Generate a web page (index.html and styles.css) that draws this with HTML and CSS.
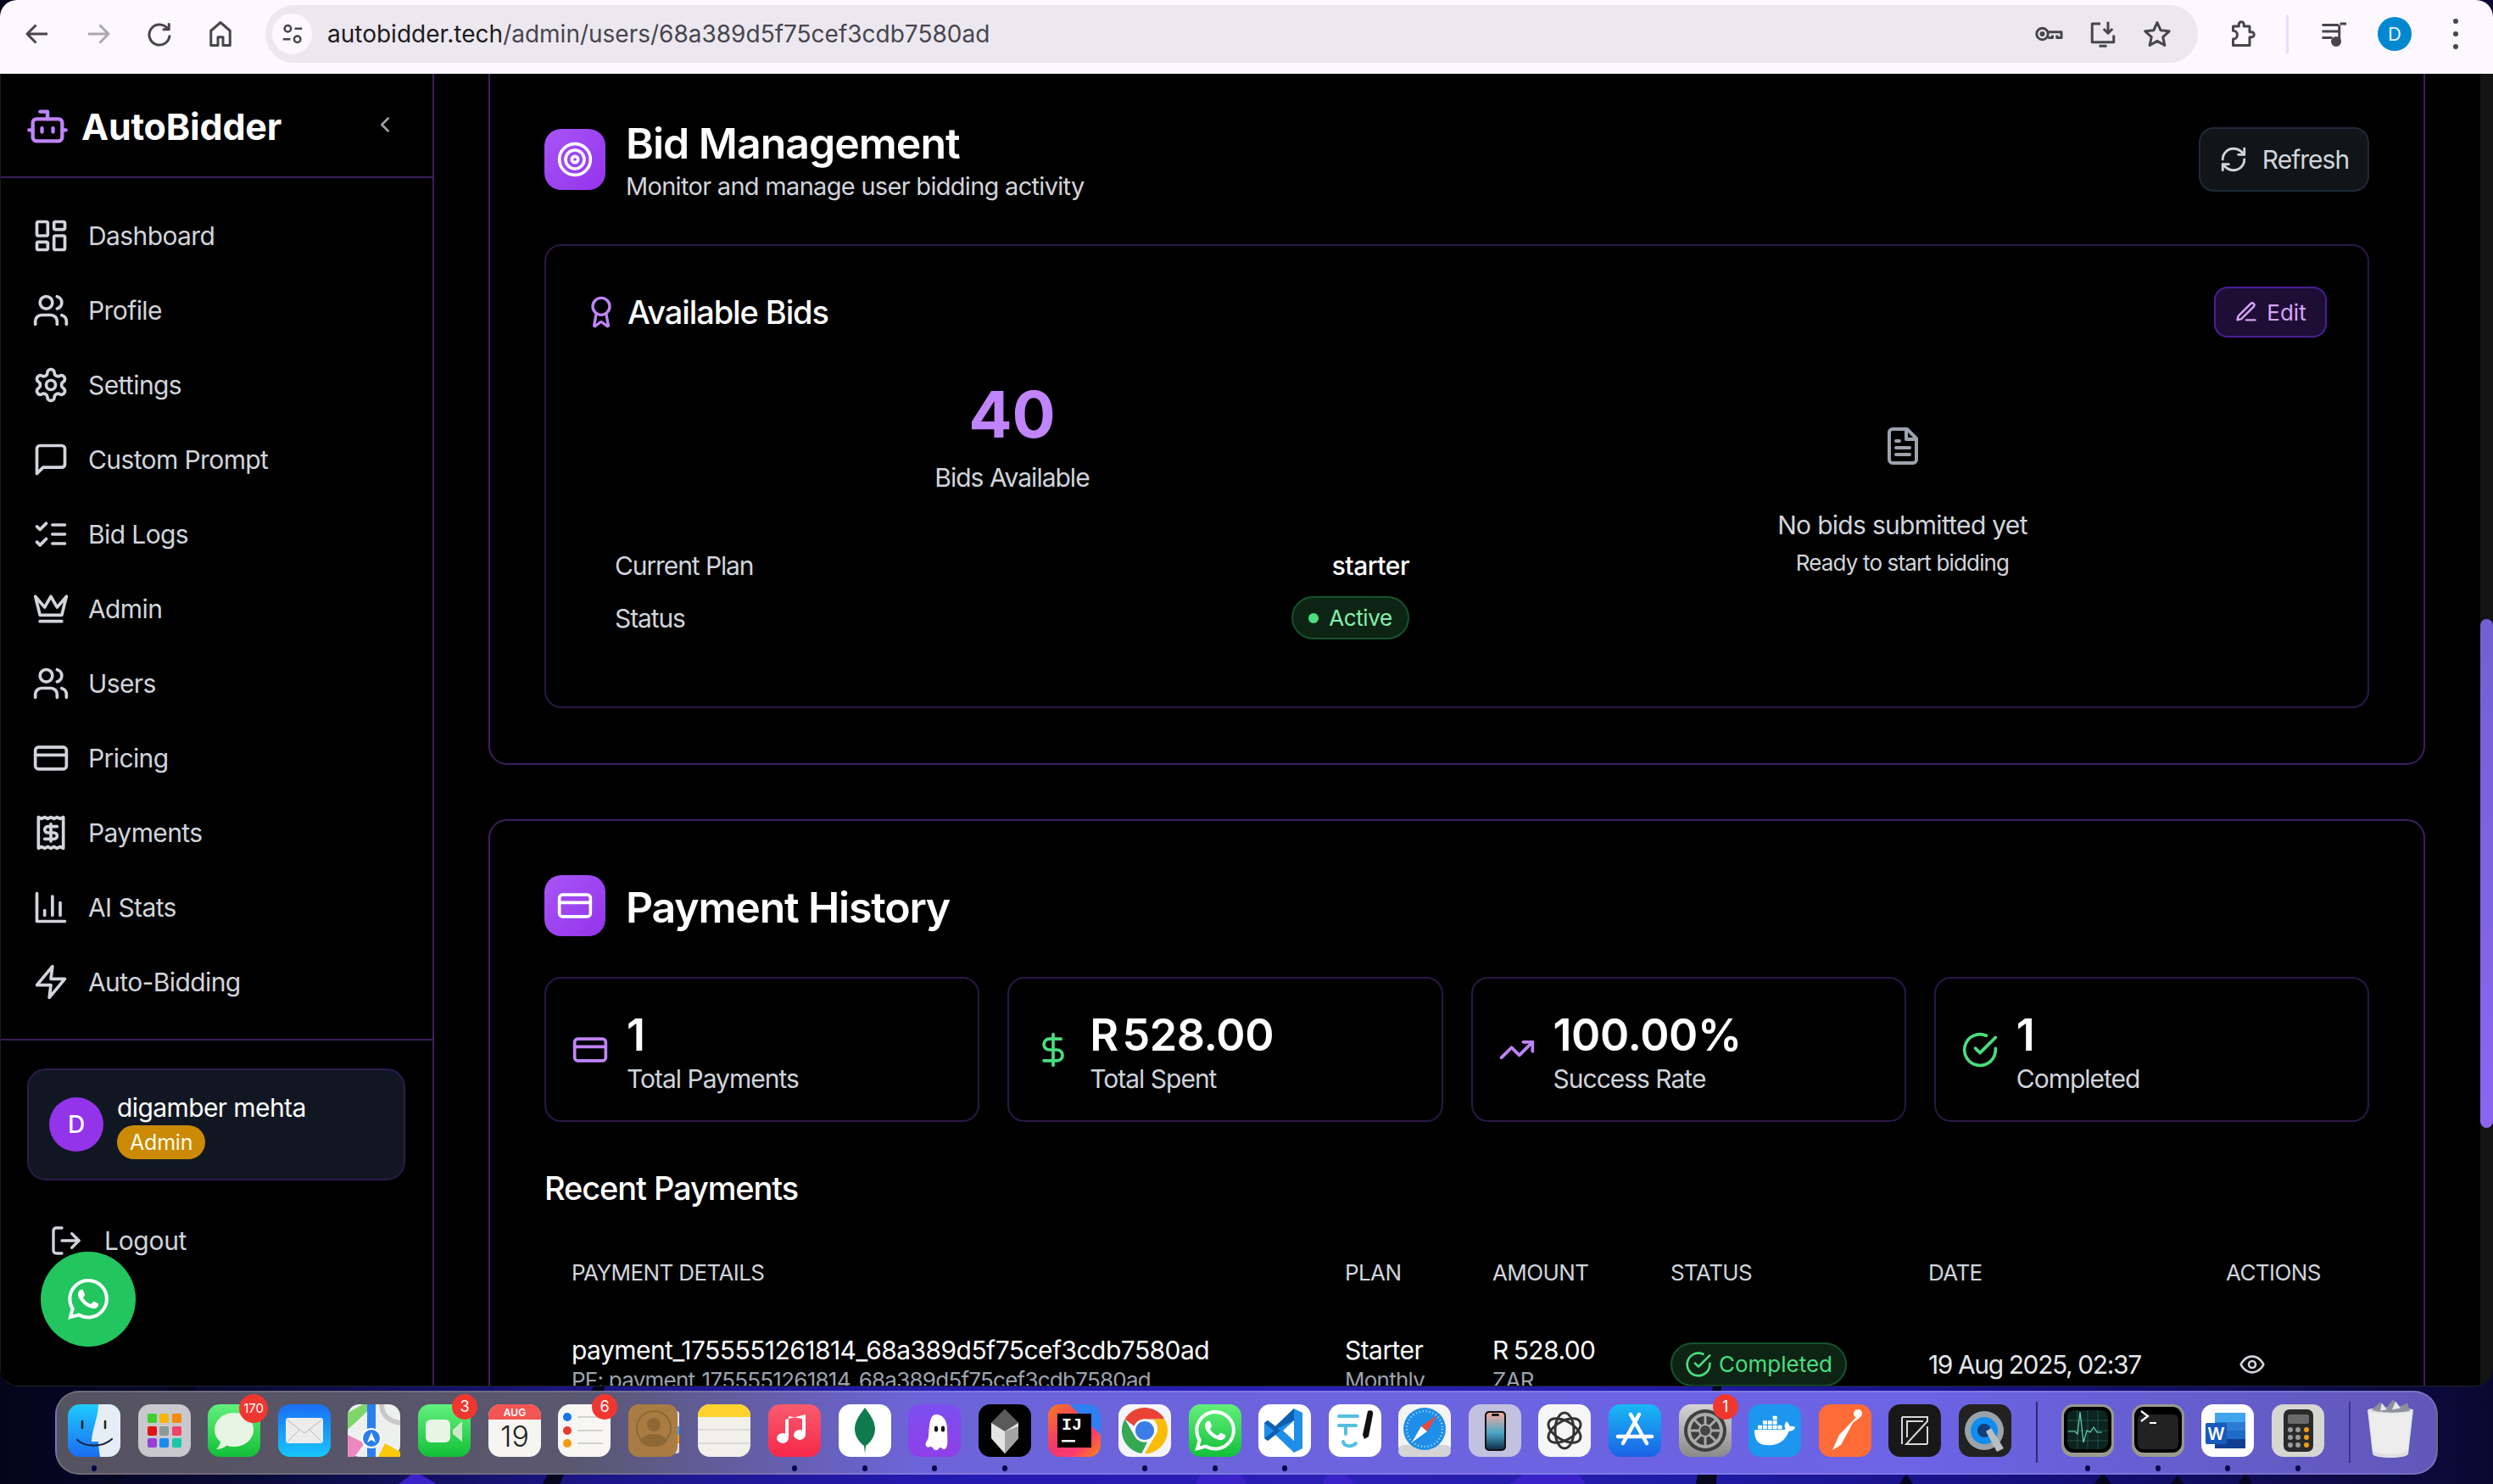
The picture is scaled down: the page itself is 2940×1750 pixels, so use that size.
FILE: index.html
```html
<!DOCTYPE html>
<html lang="en">
<head>
<meta charset="utf-8">
<title>AutoBidder</title>
<link rel="stylesheet" href="styles.css">
</head>
<body>
<svg class="sprite" aria-hidden="true">
  <symbol id="i-dash" viewBox="0 0 24 24"><rect x="3" y="3" width="7" height="9" rx="1"/><rect x="14" y="3" width="7" height="5" rx="1"/><rect x="14" y="12" width="7" height="9" rx="1"/><rect x="3" y="16" width="7" height="5" rx="1"/></symbol>
  <symbol id="i-users" viewBox="0 0 24 24"><path d="M16 21v-2a4 4 0 0 0-4-4H6a4 4 0 0 0-4 4v2"/><circle cx="9" cy="7" r="4"/><path d="M22 21v-2a4 4 0 0 0-3-3.87"/><path d="M16 3.13a4 4 0 0 1 0 7.75"/></symbol>
  <symbol id="i-cog" viewBox="0 0 24 24"><path d="M12.22 2h-.44a2 2 0 0 0-2 2v.18a2 2 0 0 1-1 1.73l-.43.25a2 2 0 0 1-2 0l-.15-.08a2 2 0 0 0-2.73.73l-.22.38a2 2 0 0 0 .73 2.73l.15.1a2 2 0 0 1 1 1.72v.51a2 2 0 0 1-1 1.74l-.15.09a2 2 0 0 0-.73 2.73l.22.38a2 2 0 0 0 2.73.73l.15-.08a2 2 0 0 1 2 0l.43.25a2 2 0 0 1 1 1.73V20a2 2 0 0 0 2 2h.44a2 2 0 0 0 2-2v-.18a2 2 0 0 1 1-1.73l.43-.25a2 2 0 0 1 2 0l.15.08a2 2 0 0 0 2.73-.73l.22-.39a2 2 0 0 0-.73-2.73l-.15-.08a2 2 0 0 1-1-1.74v-.5a2 2 0 0 1 1-1.74l.15-.09a2 2 0 0 0 .73-2.73l-.22-.38a2 2 0 0 0-2.73-.73l-.15.08a2 2 0 0 1-2 0l-.43-.25a2 2 0 0 1-1-1.73V4a2 2 0 0 0-2-2z"/><circle cx="12" cy="12" r="3"/></symbol>
  <symbol id="i-msg" viewBox="0 0 24 24"><path d="M21 15a2 2 0 0 1-2 2H7l-4 4V5a2 2 0 0 1 2-2h14a2 2 0 0 1 2 2z"/></symbol>
  <symbol id="i-list" viewBox="0 0 24 24"><path d="m3 17 2 2 4-4"/><path d="m3 7 2 2 4-4"/><path d="M13 6h8"/><path d="M13 12h8"/><path d="M13 18h8"/></symbol>
  <symbol id="i-crown" viewBox="0 0 24 24"><path d="M2 4l3 12h14l3-12-6 7-4-7-4 7-6-7z"/><path d="M5 20h14"/></symbol>
  <symbol id="i-card" viewBox="0 0 24 24"><rect x="2" y="5" width="20" height="14" rx="2"/><path d="M2 10h20"/></symbol>
  <symbol id="i-receipt" viewBox="0 0 24 24"><path d="M4 2v20l2-1 2 1 2-1 2 1 2-1 2 1 2-1 2 1V2l-2 1-2-1-2 1-2-1-2 1-2-1-2 1Z"/><path d="M16 8h-6a2 2 0 1 0 0 4h4a2 2 0 1 1 0 4H8"/><path d="M12 17.5v-11"/></symbol>
  <symbol id="i-chart" viewBox="0 0 24 24"><path d="M3 3v18h18"/><path d="M18 17V9"/><path d="M13 17V5"/><path d="M8 17v-3"/></symbol>
  <symbol id="i-zap" viewBox="0 0 24 24"><path d="M13 2 3 14h9l-1 8 10-12h-9l1-8z"/></symbol>
  <symbol id="i-check" viewBox="0 0 24 24"><path d="M22 11.08V12a10 10 0 1 1-5.93-9.14"/><path d="m9 11 3 3L22 4"/></symbol>
  <symbol id="i-wa" viewBox="0 0 24 24"><path d="M17.472 14.382c-.297-.149-1.758-.867-2.03-.967-.273-.099-.471-.148-.67.15-.197.297-.767.966-.94 1.164-.173.199-.347.223-.644.075-.297-.15-1.255-.463-2.39-1.475-.883-.788-1.48-1.761-1.653-2.059-.173-.297-.018-.458.13-.606.134-.133.298-.347.446-.52.149-.174.198-.298.298-.497.099-.198.05-.371-.025-.52-.075-.149-.669-1.612-.916-2.207-.242-.579-.487-.5-.669-.51-.173-.008-.371-.01-.57-.01-.198 0-.52.074-.792.372-.272.297-1.04 1.016-1.04 2.479 0 1.462 1.065 2.875 1.213 3.074.149.198 2.096 3.2 5.077 4.487.709.306 1.262.489 1.694.625.712.227 1.36.195 1.871.118.571-.085 1.758-.719 2.006-1.413.248-.694.248-1.289.173-1.413-.074-.124-.272-.198-.57-.347m-5.421 7.403h-.004a9.87 9.87 0 01-5.031-1.378l-.361-.214-3.741.982.998-3.648-.235-.374a9.86 9.86 0 01-1.51-5.26c.001-5.45 4.436-9.884 9.888-9.884 2.64 0 5.122 1.03 6.988 2.898a9.825 9.825 0 012.893 6.994c-.003 5.45-4.437 9.884-9.885 9.884m8.413-18.297A11.815 11.815 0 0012.05 0C5.495 0 .16 5.335.157 11.892c0 2.096.547 4.142 1.588 5.945L.057 24l6.305-1.654a11.882 11.882 0 005.683 1.448h.005c6.554 0 11.89-5.335 11.893-11.893a11.821 11.821 0 00-3.48-8.413Z"/></symbol>
  <defs>
    <linearGradient id="g-finder" x1="0" y1="0" x2="0" y2="1"><stop offset="0" stop-color="#1fcbff"/><stop offset="1" stop-color="#1a6cf2"/></linearGradient>
    <linearGradient id="g-green" x1="0" y1="0" x2="0" y2="1"><stop offset="0" stop-color="#62f07c"/><stop offset="1" stop-color="#12c038"/></linearGradient>
    <linearGradient id="g-mail" x1="0" y1="0" x2="0" y2="1"><stop offset="0" stop-color="#1a6ef5"/><stop offset="1" stop-color="#18c6fb"/></linearGradient>
    <linearGradient id="g-music" x1="0" y1="0" x2="0" y2="1"><stop offset="0" stop-color="#f95c6e"/><stop offset="1" stop-color="#f7284a"/></linearGradient>
    <linearGradient id="g-ghost" x1="0" y1="0" x2="0" y2="1"><stop offset="0" stop-color="#7c4ff0"/><stop offset="1" stop-color="#8f3fe8"/></linearGradient>
    <linearGradient id="g-idea" x1="0" y1="0" x2="1" y2="1"><stop offset="0" stop-color="#fb7a1c"/><stop offset=".45" stop-color="#f0396e"/><stop offset=".7" stop-color="#fb3a70"/><stop offset="1" stop-color="#fc8a10"/></linearGradient>
    <linearGradient id="g-store" x1="0" y1="0" x2="0" y2="1"><stop offset="0" stop-color="#19b8f5"/><stop offset="1" stop-color="#1a62e6"/></linearGradient>
    <linearGradient id="g-phone" x1="0" y1="0" x2="0" y2="1"><stop offset="0" stop-color="#f9a9a0"/><stop offset=".55" stop-color="#4aa7c6"/><stop offset="1" stop-color="#103048"/></linearGradient>
    <linearGradient id="g-gear" x1="0" y1="0" x2="0" y2="1"><stop offset="0" stop-color="#d4d4d4"/><stop offset="1" stop-color="#8a8a8a"/></linearGradient>
  </defs>
</svg>

<header class="toolbar">
  <div class="nav-btns">
    <svg class="tb-ic" viewBox="0 0 24 24"><path d="M20 12H5M11 5l-7 7 7 7"/></svg>
    <svg class="tb-ic tb-off" viewBox="0 0 24 24"><path d="M4 12h15M13 5l7 7-7 7"/></svg>
    <svg class="tb-ic" viewBox="0 0 24 24"><path d="M18.5 8A8 8 0 1 0 20 13M19.500 3.500V8.500H14.500"/></svg>
    <svg class="tb-ic" viewBox="0 0 24 24"><path d="M12 3 4.500 9.500V21H10v-6.500h4V21h5.500V9.500z"/></svg>
  </div>
  <div class="omnibox">
    <span class="site-chip">
      <svg class="tb-ic tb-chip" viewBox="0 0 24 24"><circle cx="7.500" cy="7" r="3"/><path d="M14 7h7M3 17h7"/><circle cx="16.500" cy="17" r="3"/></svg>
    </span>
    <span class="url"><span class="url-host">autobidder.tech</span>/admin/users/68a389d5f75cef3cdb7580ad</span>
    <span class="omni-right">
      <svg class="tb-ic" viewBox="0 0 24 24"><circle cx="7" cy="12" r="4.500"/><circle cx="7" cy="12" r="1"/><path d="M11.500 10.500H22V15h-3.500v-2M15 13v2h-3.500"/></svg>
      <svg class="tb-ic" viewBox="0 0 24 24"><path d="M10 4H3.500v14.500h17V13M16 2.500V11M12.500 8l3.500 3.500L19.500 8M9 21.500h6"/></svg>
      <svg class="tb-ic" viewBox="0 0 24 24"><path d="m12 3 2.800 6.200 6.700.7-5 4.500 1.400 6.600-5.900-3.400L6.100 21l1.400-6.600-5-4.500 6.700-.7z"/></svg>
    </span>
  </div>
  <div class="tb-right">
    <svg class="tb-ic" viewBox="0 0 24 24"><path d="M5 6h4.500V4.500a2 2 0 0 1 4 0V6H18v4.500h1.500a2 2 0 0 1 0 4H18V21H5v-5a3 3 0 0 0 0-6.500z"/></svg>
    <span class="tb-sep"></span>
    <svg class="tb-ic" viewBox="0 0 24 24"><path d="M3 5h13M3 10h13M3 15h8M16.500 5v13"/><path d="M17 4h5"/><circle cx="14" cy="18" r="3" class="tb-fill"/></svg>
    <span class="tb-avatar">D</span>
    <span class="tb-dots"><i></i><i></i><i></i></span>
  </div>
</header>

<div class="app">
  <aside class="sidebar">
    <div class="brand">
      <svg class="ic brand-ic" viewBox="0 0 24 24"><path d="M12 8V4H8"/><rect x="4" y="8" width="16" height="12" rx="2"/><path d="M2 14h2M20 14h2M15 13v2M9 13v2"/></svg>
      <span class="brand-name">AutoBidder</span>
      <svg class="ic brand-chev" viewBox="0 0 24 24"><path d="m15 18-6-6 6-6"/></svg>
    </div>
    <nav class="menu">
      <a class="menu-item"><svg class="ic menu-ic"><use href="#i-dash"/></svg>Dashboard</a>
      <a class="menu-item"><svg class="ic menu-ic"><use href="#i-users"/></svg>Profile</a>
      <a class="menu-item"><svg class="ic menu-ic"><use href="#i-cog"/></svg>Settings</a>
      <a class="menu-item"><svg class="ic menu-ic"><use href="#i-msg"/></svg>Custom Prompt</a>
      <a class="menu-item"><svg class="ic menu-ic"><use href="#i-list"/></svg>Bid Logs</a>
      <a class="menu-item"><svg class="ic menu-ic"><use href="#i-crown"/></svg>Admin</a>
      <a class="menu-item"><svg class="ic menu-ic"><use href="#i-users"/></svg>Users</a>
      <a class="menu-item"><svg class="ic menu-ic"><use href="#i-card"/></svg>Pricing</a>
      <a class="menu-item"><svg class="ic menu-ic"><use href="#i-receipt"/></svg>Payments</a>
      <a class="menu-item"><svg class="ic menu-ic"><use href="#i-chart"/></svg>AI Stats</a>
      <a class="menu-item"><svg class="ic menu-ic"><use href="#i-zap"/></svg>Auto-Bidding</a>
    </nav>
    <div class="side-foot">
      <div class="user-card">
        <span class="avatar">D</span>
        <div class="user-meta">
          <div class="user-name">digamber mehta</div>
          <span class="role">Admin</span>
        </div>
      </div>
      <a class="logout"><svg class="ic logout-ic" viewBox="0 0 24 24"><path d="M9 21H5a2 2 0 0 1-2-2V5a2 2 0 0 1 2-2h4"/><path d="m16 17 5-5-5-5"/><path d="M21 12H9"/></svg>Logout</a>
    </div>
    <button class="wa-fab"><svg class="wa-ic"><use href="#i-wa"/></svg></button>
  </aside>

  <main class="main">
    <section class="panel panel-cut">
      <div class="panel-head">
        <div class="head-left">
          <span class="tile"><svg class="ic tile-ic" viewBox="0 0 24 24"><circle cx="12" cy="12" r="10"/><circle cx="12" cy="12" r="6"/><circle cx="12" cy="12" r="2"/></svg></span>
          <div class="head-text">
            <h2 class="title">Bid Management</h2>
            <p class="subtitle">Monitor and manage user bidding activity</p>
          </div>
        </div>
        <button class="btn-refresh"><svg class="ic refresh-ic" viewBox="0 0 24 24"><path d="M3 12a9 9 0 0 1 9-9 9.750 9.750 0 0 1 6.740 2.740L21 8"/><path d="M21 3v5h-5"/><path d="M21 12a9 9 0 0 1-9 9 9.750 9.750 0 0 1-6.740-2.740L3 16"/><path d="M8 16H3v5"/></svg>Refresh</button>
      </div>
      <div class="bids-card">
        <div class="bids-head">
          <h3 class="bids-title"><svg class="ic award-ic" viewBox="0 0 24 24"><path d="m15.477 12.890 1.515 8.526a.5.5 0 0 1-.81.470l-3.580-2.687a1 1 0 0 0-1.197 0l-3.586 2.686a.5.5 0 0 1-.81-.469l1.514-8.526"/><circle cx="12" cy="8" r="6"/></svg>Available Bids</h3>
          <button class="btn-edit"><svg class="ic edit-ic" viewBox="0 0 24 24"><path d="M12 20h9"/><path d="M16.500 3.500a2.120 2.120 0 0 1 3 3L7 19l-4 1 1-4Z"/></svg>Edit</button>
        </div>
        <div class="bids-body">
          <div class="bids-left">
            <div class="bids-count">40</div>
            <div class="bids-label">Bids Available</div>
            <div class="kv"><span>Current Plan</span><span class="kv-val">starter</span></div>
            <div class="kv kv-status"><span>Status</span><span class="pill-active"><i class="dot"></i>Active</span></div>
          </div>
          <div class="bids-right">
            <svg class="ic doc-ic" viewBox="0 0 24 24"><path d="M14.500 2H6a2 2 0 0 0-2 2v16a2 2 0 0 0 2 2h12a2 2 0 0 0 2-2V7.500L14.500 2z"/><path d="M14 2v6h6"/><path d="M16 13H8"/><path d="M16 17H8"/><path d="M10 9H8"/></svg>
            <div class="empty-title">No bids submitted yet</div>
            <div class="empty-sub">Ready to start bidding</div>
          </div>
        </div>
      </div>
    </section>

    <section class="panel panel-pay">
      <div class="head-left">
        <span class="tile"><svg class="ic tile-ic"><use href="#i-card"/></svg></span>
        <h2 class="title title-lg">Payment History</h2>
      </div>
      <div class="stats">
        <div class="stat"><svg class="ic stat-ic stat-purple"><use href="#i-card"/></svg><div class="stat-text"><div class="stat-val">1</div><div class="stat-lbl">Total Payments</div></div></div>
        <div class="stat"><svg class="ic stat-ic stat-green" viewBox="0 0 24 24"><path d="M12 2v20"/><path d="M17 5H9.500a3.500 3.500 0 0 0 0 7h5a3.500 3.500 0 0 1 0 7H6"/></svg><div class="stat-text"><div class="stat-val">R 528.00</div><div class="stat-lbl">Total Spent</div></div></div>
        <div class="stat"><svg class="ic stat-ic stat-purple" viewBox="0 0 24 24"><path d="m22 7-8.500 8.500-5-5L2 17"/><path d="M16 7h6v6"/></svg><div class="stat-text"><div class="stat-val">100.00%</div><div class="stat-lbl">Success Rate</div></div></div>
        <div class="stat"><svg class="ic stat-ic stat-green"><use href="#i-check"/></svg><div class="stat-text"><div class="stat-val">1</div><div class="stat-lbl">Completed</div></div></div>
      </div>
      <h3 class="recent">Recent Payments</h3>
      <table class="pay-table">
        <colgroup><col class="c1"><col class="c2"><col class="c3"><col class="c4"><col class="c5"><col class="c6"></colgroup>
        <thead>
          <tr><th>Payment Details</th><th>Plan</th><th>Amount</th><th>Status</th><th>Date</th><th>Actions</th></tr>
        </thead>
        <tbody>
          <tr>
            <td><div class="cell-main">payment_1755551261814_68a389d5f75cef3cdb7580ad</div><div class="cell-sub">PF: payment_1755551261814_68a389d5f75cef3cdb7580ad</div></td>
            <td><div class="cell-main">Starter</div><div class="cell-sub">Monthly</div></td>
            <td><div class="cell-main">R 528.00</div><div class="cell-sub">ZAR</div></td>
            <td class="cell-low"><span class="pill-done"><svg class="ic done-ic"><use href="#i-check"/></svg>Completed</span></td>
            <td class="cell-low cell-date">19 Aug 2025, 02:37</td>
            <td class="cell-low"><svg class="ic eye-ic" viewBox="0 0 24 24"><path d="M2 12s3-7 10-7 10 7 10 7-3 7-10 7-10-7-10-7Z"/><circle cx="12" cy="12" r="3"/></svg></td>
          </tr>
        </tbody>
      </table>
    </section>
  </main>
  <div class="scrolltrack"><span class="scrollthumb"></span></div>
</div>

<footer class="desk">
  <svg class="wall" viewBox="0 0 2940 115" preserveAspectRatio="none"><path d="M470 115 490 100 515 115zM1410 115 1440 60 1470 115zM1560 115 1570 90 1600 115zM1780 115l60-40 30 40z" fill="#3a22c8"/><path d="M120 115 200 0h30L140 115zM640 115 700 0h14L660 115zM2000 115 2020 0h10l-6 115zM2240 115l8-12 8 12zM2470 115l10-14 10 14zM2560 115l8-10 8 10zM2640 115l8-14 8 14z" fill="#06061e"/></svg>
  <div class="dock">
    <div class="di on"><svg class="a" viewBox="0 0 62 62"><rect width="62" height="62" rx="14" fill="url(#g-finder)"/><path d="M36 0h12a14 14 0 0 1 14 14v34a14 14 0 0 1-14 14H38c-1-6-2-14-2-18h-8c0-14 8-28 8-44z" fill="#e6edf5"/><path d="M17 20v8M44 20v8" stroke="#222" stroke-width="2.500" stroke-linecap="round"/><path d="M11 42c10 9 30 9 41-1" fill="none" stroke="#1a2a44" stroke-width="2.200" stroke-linecap="round"/></svg></div>
    <div class="di"><svg class="a" viewBox="0 0 62 62"><rect width="62" height="62" rx="14" fill="#c9c8cd"/><rect x="11" y="11" width="11" height="11" rx="2" fill="#3fcf2e"/><rect x="25" y="11" width="11" height="11" rx="2" fill="#f7b500"/><rect x="40" y="11" width="11" height="11" rx="2" fill="#f58a0c"/><rect x="11" y="26" width="11" height="11" rx="2" fill="#e01414"/><rect x="25" y="26" width="11" height="11" rx="2" fill="#8a9a9a"/><rect x="40" y="26" width="11" height="11" rx="2" fill="#f0426a"/><rect x="11" y="40" width="11" height="11" rx="2" fill="#9640d8"/><rect x="25" y="40" width="11" height="11" rx="2" fill="#1a8cf0"/><rect x="40" y="40" width="11" height="11" rx="2" fill="#1ac8a8"/></svg></div>
    <div class="di"><svg class="a" viewBox="0 0 62 62"><rect width="62" height="62" rx="14" fill="url(#g-green)"/><ellipse cx="31" cy="30" rx="23" ry="20" fill="#e9f5e4"/><path d="M15 43c0 5-3 8-5 10 6 0 11-3 14-6z" fill="#e9f5e4"/></svg><b class="badge badge-wide">170</b></div>
    <div class="di"><svg class="a" viewBox="0 0 62 62"><rect width="62" height="62" rx="14" fill="url(#g-mail)"/><rect x="9" y="16" width="44" height="30" rx="3" fill="#ececec"/><path d="M10 18 31 34l21-16M10 45l15-15M52 45 37 30" fill="none" stroke="#b8b8b8"/></svg></div>
    <div class="di"><svg class="a" viewBox="0 0 62 62"><rect width="62" height="62" rx="14" fill="#eef0ee"/><path d="M0 10 18 0h14L0 30z" fill="#7ed66a"/><path d="M23 0h10v62H23z" fill="#2a7ff0"/><path d="M0 36 20 46 8 62H0z" fill="#ec88c0"/><path d="M36 62l8-16 18 10v6z" fill="#fbc80a"/><path d="M40 0c0 12 8 20 22 22" fill="none" stroke="#c8c8c8" stroke-width="6"/><circle cx="28" cy="40" r="12" fill="#fff"/><circle cx="28" cy="40" r="10" fill="#2a7ff0"/><path d="M28 33l5 12-5-3-5 3z" fill="#fff"/></svg></div>
    <div class="di"><svg class="a" viewBox="0 0 62 62"><rect width="62" height="62" rx="14" fill="url(#g-green)"/><rect x="9" y="18" width="29" height="27" rx="6" fill="#e9f5e4"/><path d="M41 30l11-10v24L41 35z" fill="#cfe9c8"/></svg><b class="badge">3</b></div>
    <div class="di"><svg class="a" viewBox="0 0 62 62"><rect width="62" height="62" rx="14" fill="#f6f5f2"/><path d="M0 14A14 14 0 0 1 14 0h34a14 14 0 0 1 14 14v4H0z" fill="#f25552"/><text x="31" y="14" class="cal-m">AUG</text><text x="31" y="50" class="cal-d">19</text></svg></div>
    <div class="di"><svg class="a" viewBox="0 0 62 62"><rect width="62" height="62" rx="14" fill="#f7f6f3"/><circle cx="11" cy="15" r="5" fill="#1a72f0"/><circle cx="11" cy="31" r="5" fill="#e83a30"/><circle cx="11" cy="46" r="5" fill="#f59a10"/><path d="M23 15h30M23 31h30M23 46h30" stroke="#c8c8c8" stroke-width="1.500"/></svg><b class="badge">6</b></div>
    <div class="di"><svg class="a" viewBox="0 0 62 62"><rect x="48" y="8" width="12" height="50" rx="3" fill="#e0e0e0"/><rect x="54" y="26" width="6" height="10" fill="#38a8f0"/><rect x="54" y="36" width="6" height="10" fill="#f59a10"/><rect width="58" height="62" rx="12" fill="#a87c42"/><circle cx="30" cy="28" r="20" fill="none" stroke="#8e6834" stroke-width="2"/><circle cx="30" cy="24" r="8" fill="#8e6834"/><path d="M14 44c4-12 28-12 32 0-8 8-24 8-32 0z" fill="#8e6834"/></svg></div>
    <div class="di"><svg class="a" viewBox="0 0 62 62"><rect width="62" height="62" rx="14" fill="#f2f0ea"/><path d="M0 14A14 14 0 0 1 14 0h34a14 14 0 0 1 14 14v1H0z" fill="#fdd22c"/><path d="M0 30h62M0 46h62" stroke="#d6d4ce" stroke-width="1.500"/></svg></div>
    <div class="di on"><svg class="a" viewBox="0 0 62 62"><rect width="62" height="62" rx="14" fill="url(#g-music)"/><path d="M24 14v26a7 6 0 1 1-4-5.500V18l24-6v24a7 6 0 1 1-4-5.500V17z" fill="#fff"/></svg></div>
    <div class="di on"><svg class="a" viewBox="0 0 62 62"><rect width="62" height="62" rx="14" fill="#fff"/><path d="M31 4c6 8 12 16 12 25 0 10-7 17-11 20l-1 9-1-9c-4-3-11-10-11-20 0-9 6-17 12-25z" fill="#0e7a4e"/></svg></div>
    <div class="di on"><svg class="a" viewBox="0 0 62 62"><rect width="62" height="62" rx="14" fill="url(#g-ghost)"/><path d="M33 12c8 0 13 7 13 17 0 11 2 22-3 24-3 1-3-2-5-2s-3 4-6 3c-2 0-3-4-5-4s-4 2-6-1c-2-4 3-6 3-12 1-6 0-25 9-25z" fill="#fff"/><ellipse cx="33" cy="29" rx="2.200" ry="3.500" fill="#111"/><ellipse cx="41" cy="29" rx="2.200" ry="3.500" fill="#111"/></svg></div>
    <div class="di on"><svg class="a" viewBox="0 0 62 62"><rect width="62" height="62" rx="14" fill="#000"/><path d="M31 6 15 22v18l16 18 16-18V22z" fill="#8c8c8c"/><path d="M15 22l16 10 16-10-16-16z" fill="#5a5a5a"/><path d="M15 22l16 10 16-10v4L33 38l14 2-16 18-16-18z" fill="#e4e4e4"/><path d="M31 32l16-6v14L31 58z" fill="#a4a4a4"/></svg></div>
    <div class="di"><svg class="a" viewBox="0 0 62 62"><rect width="62" height="62" rx="14" fill="url(#g-idea)"/><path d="M25 0h23a14 14 0 0 1 14 14v22z" fill="#2f7ff5"/><rect x="11" y="11" width="40" height="40" fill="#000"/><text x="16" y="30" class="ij">IJ</text><rect x="16" y="42" width="16" height="2.500" fill="#fff"/></svg></div>
    <div class="di on"><svg class="a" viewBox="0 0 62 62"><rect width="62" height="62" rx="14" fill="#f5f4fa"/><path d="M31 4a27 27 0 0 1 23.400 13.500H31a13.500 13.500 0 0 0-12.400 8.200L7.600 17.500A27 27 0 0 1 31 4z" fill="#ea4335"/><path d="M7.600 17.500 18.900 37.200a13.500 13.500 0 0 0 15.200 7L27.500 57.800A27 27 0 0 1 7.600 17.500z" fill="#34a853"/><path d="M54.400 17.500H40a13.500 13.500 0 0 1 2.700 20.500L31 58A27 27 0 0 0 54.400 17.500z" fill="#fbbc05"/><circle cx="31" cy="31" r="13.500" fill="#fff"/><circle cx="31" cy="31" r="11" fill="#3b7de8"/></svg></div>
    <div class="di on"><svg class="a" viewBox="0 0 62 62"><rect width="62" height="62" rx="14" fill="url(#g-green)"/><svg x="7" y="7" width="48" height="48" class="wa-dock"><use href="#i-wa"/></svg></svg></div>
    <div class="di on"><svg class="a" viewBox="0 0 62 62"><rect width="62" height="62" rx="14" fill="#fff"/><path d="M42 5 52 10v42L42 57 20 36l-9 7-4-3V22l4-3 9 7zM42 19 29 31l13 12z" fill="#1f8ee8"/><path d="M42 5 20 26l-9-7-4 3 11 9 24-12zM11 43l9-7 6-5-4-3-15 12z" fill="#0f5fb0"/></svg></div>
    <div class="di"><svg class="a" viewBox="0 0 62 62"><rect width="62" height="62" rx="14" fill="#fff"/><path d="M12 14h22M12 25h20M20 25v10M17 44c1 6 10 7 15 2" fill="none" stroke="#54c0e0" stroke-width="4" stroke-linecap="round"/><path d="M46 8c4-2 7 0 6 4l-5 26-5 3-2-5z" fill="#111"/></svg></div>
    <div class="di"><svg class="a" viewBox="0 0 62 62"><rect width="62" height="62" rx="14" fill="#f4f4f4"/><rect y="48" width="62" height="14" rx="7" fill="#d4d4d4"/><circle cx="31" cy="29" r="25" fill="#1e8ee8"/><circle cx="31" cy="29" r="21" fill="none" stroke="#bfe0fa" stroke-width="2.500" stroke-dasharray="1 3"/><path d="M46 13 27 26l7 6z" fill="#ef4638"/><path d="M16 45l11-19 7 6z" fill="#fff"/></svg></div>
    <div class="di"><svg class="a" viewBox="0 0 62 62"><rect width="62" height="62" rx="14" fill="#c3c1e0"/><rect x="19" y="8" width="25" height="47" rx="5" fill="#111"/><rect x="21" y="10" width="21" height="43" rx="3.500" fill="url(#g-phone)"/><rect x="27" y="11" width="9" height="3" rx="1.500" fill="#111"/></svg></div>
    <div class="di"><svg class="a" viewBox="0 0 62 62"><rect width="62" height="62" rx="14" fill="#f6f6f6"/><g fill="none" stroke="#333" stroke-width="3"><ellipse cx="31" cy="31" rx="11" ry="21"/><ellipse cx="31" cy="31" rx="11" ry="21" transform="rotate(60 31 31)"/><ellipse cx="31" cy="31" rx="11" ry="21" transform="rotate(120 31 31)"/></g></svg></div>
    <div class="di"><svg class="a" viewBox="0 0 62 62"><rect width="62" height="62" rx="14" fill="url(#g-store)"/><path d="M36 12 17 46M26 12l19 34M11 38h40" stroke="#fff" stroke-width="4.500" stroke-linecap="round" fill="none"/></svg></div>
    <div class="di"><svg class="a" viewBox="0 0 62 62"><rect width="62" height="62" rx="14" fill="url(#g-gear)"/><circle cx="31" cy="31" r="25" fill="#3e3e3e"/><circle cx="31" cy="31" r="19" fill="none" stroke="#aaa" stroke-width="4"/><path d="M31 12v38M12 31h38M18 18l26 26M44 18 18 44" stroke="#aaa" stroke-width="3"/><circle cx="31" cy="31" r="7" fill="#444" stroke="#aaa" stroke-width="2"/></svg><b class="badge">1</b></div>
    <div class="di"><svg class="a" viewBox="0 0 62 62"><rect width="62" height="62" rx="14" fill="#1d96f0"/><svg x="7" y="7" width="48" height="48" class="white-fill" viewBox="0 0 24 24"><path d="M13.983 11.078h2.119a.186.186 0 00.186-.185V9.006a.186.186 0 00-.186-.186h-2.119a.185.185 0 00-.185.185v1.888c0 .102.083.185.185.185m-2.954-5.430h2.118a.186.186 0 00.186-.186V3.574a.186.186 0 00-.186-.185h-2.118a.185.185 0 00-.185.185v1.888c0 .102.082.185.185.186m0 2.716h2.118a.187.187 0 00.186-.186V6.290a.186.186 0 00-.186-.185h-2.118a.185.185 0 00-.185.185v1.887c0 .102.082.185.185.186m-2.930 0h2.120a.186.186 0 00.184-.186V6.290a.185.185 0 00-.185-.185H8.100a.185.185 0 00-.185.185v1.887c0 .102.083.185.185.186m-2.964 0h2.119a.186.186 0 00.185-.186V6.290a.185.185 0 00-.185-.185H5.136a.186.186 0 00-.186.185v1.887c0 .102.084.185.186.186m5.893 2.715h2.118a.186.186 0 00.186-.185V9.006a.186.186 0 00-.186-.186h-2.118a.185.185 0 00-.185.185v1.888c0 .102.082.185.185.185m-2.930 0h2.120a.185.185 0 00.184-.185V9.006a.185.185 0 00-.184-.186h-2.120a.185.185 0 00-.184.185v1.888c0 .102.083.185.185.185m-2.964 0h2.119a.185.185 0 00.185-.185V9.006a.185.185 0 00-.184-.186h-2.120a.186.186 0 00-.186.186v1.887c0 .102.084.185.186.185m-2.920 0h2.120a.185.185 0 00.184-.185V9.006a.185.185 0 00-.184-.186h-2.120a.185.185 0 00-.184.185v1.888c0 .102.082.185.185.185M23.763 9.890c-.065-.051-.672-.510-1.954-.510-.338.001-.676.030-1.010.087-.248-1.700-1.653-2.530-1.716-2.566l-.344-.199-.226.327c-.284.438-.490.922-.612 1.430-.230.970-.090 1.882.403 2.661-.595.332-1.550.413-1.744.420H.751a.751.751 0 00-.750.748 11.376 11.376 0 00.692 4.062c.545 1.428 1.355 2.480 2.410 3.124 1.180.723 3.100 1.137 5.275 1.137.983.003 1.963-.086 2.930-.266a12.248 12.248 0 003.823-1.389c.980-.567 1.860-1.288 2.610-2.136 1.252-1.418 1.998-2.997 2.553-4.400h.221c1.372 0 2.215-.549 2.680-1.009.309-.293.550-.650.707-1.046l.098-.288Z"/></svg></svg></div>
    <div class="di"><svg class="a" viewBox="0 0 62 62"><rect width="62" height="62" rx="14" fill="#ff6c37"/><path d="M47 12 24 36l-8 18 10-6 14-26 8-6z" fill="#fff"/><circle cx="46" cy="11" r="5" fill="#fff"/></svg></div>
    <div class="di"><svg class="a" viewBox="0 0 62 62"><rect width="62" height="62" rx="14" fill="#181818"/><path d="M16 15h30v5L21 47h25M16 47V15M41 20H22v19M46 47V26" fill="none" stroke="#d8d8d8" stroke-width="2"/></svg></div>
    <div class="di"><svg class="a" viewBox="0 0 62 62"><rect width="62" height="62" rx="14" fill="#222"/><circle cx="30" cy="31" r="23" fill="#9ba2a8"/><circle cx="30" cy="31" r="16" fill="#0f8df0"/><circle cx="30" cy="31" r="8" fill="#0f3e78"/><path d="M32 32l6-4 15 24-8 4z" fill="#b8bec4"/></svg></div>
    <span class="dock-sep"></span>
    <div class="di on"><svg class="a" viewBox="0 0 62 62"><rect width="62" height="62" rx="14" fill="#9a9a8c"/><rect x="3" y="3" width="56" height="54" rx="11" fill="#000"/><rect x="7" y="7" width="48" height="46" rx="8" fill="#0c2420"/><path d="M7 19h48M7 31h48M7 43h48M19 7v46M31 7v46M43 7v46" stroke="#2b5a50" stroke-width=".8"/><path d="M8 32h8l3 3 3-26 4 36 4-14 4 2 4-6 4 6h6" fill="none" stroke="#6cd4b8" stroke-width="1.200"/></svg></div>
    <div class="di on"><svg class="a" viewBox="0 0 62 62"><rect width="62" height="62" rx="14" fill="#9a9a8c"/><rect x="3" y="3" width="56" height="54" rx="11" fill="#000"/><rect x="7" y="12" width="48" height="41" rx="6" fill="#222"/><path d="M11 8l8 6-8 6M21 22h8" fill="none" stroke="#fff" stroke-width="2.200"/></svg></div>
    <div class="di on"><svg class="a" viewBox="0 0 62 62"><rect width="62" height="62" rx="14" fill="#fff"/><rect x="16" y="10" width="36" height="42" rx="2" fill="#1d6cc8"/><rect x="16" y="10" width="36" height="11" fill="#41a5ee"/><rect x="16" y="21" width="36" height="10" fill="#2b7cd3"/><rect x="16" y="41" width="36" height="11" fill="#103f91"/><rect x="5" y="22" width="25" height="25" rx="2" fill="#185abd"/><text x="17.500" y="42" class="word">W</text></svg></div>
    <div class="di on"><svg class="a" viewBox="0 0 62 62"><rect width="62" height="62" rx="14" fill="#d6d6d2"/><rect x="14" y="6" width="35" height="50" rx="7" fill="#2a2a2a"/><rect x="19" y="12" width="25" height="11" rx="2" fill="#6a6a6a"/><g fill="#9a9a9a"><circle cx="22" cy="30" r="3"/><circle cx="31" cy="30" r="3"/><circle cx="22" cy="39" r="3"/><circle cx="31" cy="39" r="3"/><circle cx="22" cy="48" r="3"/><circle cx="31" cy="48" r="3"/></g><g fill="#f59a10"><circle cx="41" cy="30" r="3"/><circle cx="41" cy="39" r="3"/><circle cx="41" cy="48" r="3"/></g></svg></div>
    <span class="dock-sep dock-sep-end"></span>
    <div class="di trash"><svg class="a-trash" viewBox="0 0 56 70"><path d="M1 12c8-4 46-4 54 0l-6 52c-1 6-41 6-42 0z" fill="#dfdfe2"/><path d="M3 14c8 3 42 3 50 0L49 60C40 66 16 66 7 60z" fill="#ededee"/><path d="M6 12 16 3l7 7 8-10 8 8 9-4 3 9C40 16 16 16 6 12z" fill="#8d8f9a"/><path d="M18 4l6 8-8 1zM34 2l6 8-10 2z" fill="#e6e6ea"/></svg></div>
  </div>
</footer>
</body>
</html>
```

FILE: styles.css
```css
* { box-sizing: border-box; }
html, body { margin: 0; padding: 0; }
body {
  width: 2940px;
  height: 1750px;
  overflow: hidden;
  display: flex;
  flex-direction: column;
  font-family: "Inter", "Liberation Sans", sans-serif;
  color: #fff;
  background: linear-gradient(90deg, #04041a 0, #0a0a38 300px, #1c1688 700px, #2419ae 1100px, #2a20b4 1600px, #1f1ba4 2000px, #150f7c 2400px, #0c0a40 2800px, #0a0830 100%);
}
.sprite { position: absolute; width: 0; height: 0; }
h2, h3, p { margin: 0; font-weight: 400; }
a { display: flex; align-items: center; }
button { font-family: inherit; cursor: pointer; }

.ic { fill: none; stroke: currentColor; stroke-width: 2; stroke-linecap: round; stroke-linejoin: round; display: block; flex: none; }

/* browser toolbar */
.toolbar {
  height: 87px;
  flex: none;
  display: flex;
  align-items: center;
  padding-bottom: 7px;
  background: #fdf7ff;
  border-radius: 20px 20px 0 0;
  color: #47454e;
}
.tb-ic { width: 36px; height: 36px; fill: none; stroke: #47454e; stroke-width: 2; stroke-linejoin: round; display: block; flex: none; }
.tb-off { stroke: #aaa8ae; }
.tb-fill { fill: #47454e; }
.nav-btns { display: flex; gap: 36px; width: 313px; padding-left: 26px; }
.omnibox {
  width: 2279px;
  height: 68px;
  border-radius: 34px;
  background: #ece8ef;
  display: flex;
  align-items: center;
  padding-left: 8px;
}
.site-chip { width: 47px; height: 48px; border-radius: 50%; background: #fdf7ff; display: flex; align-items: center; justify-content: center; flex: none; }
.tb-chip { width: 30px; height: 30px; }
.url { margin-left: 18px; font-size: 28px; color: #47454e; white-space: nowrap; }
.url-host { color: #1d1b20; }
.omni-right { margin-left: auto; display: flex; gap: 28px; padding-right: 30px; }
.tb-right { flex: 1; display: flex; align-items: center; padding-left: 34px; }
.tb-sep { width: 3px; height: 46px; background: #e8def8; border-radius: 2px; margin: 0 35px 0 34px; }
.tb-avatar { width: 40px; height: 40px; border-radius: 50%; background: #0288d1; color: #e6f4fb; display: flex; align-items: center; justify-content: center; font-size: 22px; margin-left: 34px; }
.tb-dots { display: flex; flex-direction: column; gap: 9px; margin-left: 49px; }
.tb-dots i { width: 6px; height: 6px; border-radius: 50%; background: #47454e; display: block; }

/* app window */
.app {
  height: 1548px;
  flex: none;
  display: flex;
  background: #000;
  overflow: hidden;
  border-radius: 0 0 22px 22px;
  border-bottom: 1px solid #222;
}
.sidebar { position: relative; width: 512px; flex: none; border-right: 2px solid #3b1f5e; display: flex; flex-direction: column; border-left: 1px solid #1c1c1c; }
.brand { height: 123px; flex: none; display: flex; align-items: center; padding: 2px 0 0 29px; border-bottom: 2px solid #3b1f5e; color: #c084fc; }
.brand-ic { width: 52px; height: 52px; }
.brand-name { margin-left: 14px; font-size: 43px; font-weight: 700; color: #fff; letter-spacing: -.2px; }
.brand-chev { width: 30px; height: 30px; margin-left: auto; margin-right: 41px; margin-top: -4px; color: #9ca3af; }
.menu { padding: 46px 0 0 37px; height: 1017px; flex: none; border-bottom: 2px solid #3b1f5e; display: flex; flex-direction: column; gap: 44px; }
.menu-item { height: 44px; gap: 22px; font-size: 30px; color: #d1d5db; letter-spacing: -.6px; }
.menu-ic { width: 44px; height: 44px; }
.side-foot { padding: 33px 32px 0 31px; flex: 1; }
.user-card { height: 132px; border: 2px solid #2e1a4d; border-radius: 22px; background: #111722; display: flex; align-items: center; padding-left: 24px; gap: 16px; }
.avatar { width: 64px; height: 64px; border-radius: 50%; background: #9333ea; display: flex; align-items: center; justify-content: center; font-size: 28px; font-weight: 500; flex: none; }
.user-meta { padding-top: 2px; }
.user-name { font-size: 30px; line-height: 38px; letter-spacing: -.6px; }
.role { display: inline-block; height: 40px; margin-top: 2px; padding: 0 15px; border-radius: 20px; background: #ca8a04; font-size: 25px; line-height: 40px; color: #fef9e7; letter-spacing: -.2px; }
.logout { margin: 49px 0 0 26px; gap: 25px; font-size: 30px; color: #d1d5db; height: 44px; letter-spacing: -.3px; }
.logout-ic { width: 40px; height: 40px; }
.wa-fab { position: absolute; left: 47px; bottom: 46px; width: 112px; height: 112px; border: 0; border-radius: 50%; background: #22c55e; display: flex; align-items: center; justify-content: center; padding: 0; }
.wa-ic { width: 48px; height: 48px; fill: #fff; }

.main { flex: 1; padding: 0 65px 0 64px; min-width: 0; }
.panel { border: 2px solid #3b1f5e; border-radius: 22px; background: #000; }
.panel-cut { border-top: 0; border-radius: 0 0 22px 22px; padding: 51px 64px 64px; height: 815px; }
.panel-pay { margin-top: 64px; padding: 64px 64px 0; }
.panel-head { display: flex; align-items: center; justify-content: space-between; height: 100px; }
.head-left { display: flex; align-items: center; gap: 24px; }
.head-text { padding-top: 4px; }
.tile { width: 72px; height: 72px; border-radius: 20px; background: linear-gradient(135deg, #a855f7, #9333ea); display: flex; align-items: center; justify-content: center; flex: none; color: #fff; }
.tile-ic { width: 44px; height: 44px; }
.title { font-size: 50px; line-height: 60px; font-weight: 600; letter-spacing: -1px; }
.title-lg { line-height: 68px; padding-top: 4px; letter-spacing: -1.2px; }
.subtitle { font-size: 29px; line-height: 42px; color: #d1d5db; letter-spacing: -.7px; }
.btn-refresh { width: 201px; height: 76px; border: 2px solid #1f2937; border-radius: 18px; background: #111518; color: #d1d5db; font-size: 30px; display: flex; align-items: center; justify-content: center; gap: 17px; padding: 0; letter-spacing: -1px; }
.refresh-ic { width: 34px; height: 34px; }

.bids-card { margin-top: 50px; height: 547px; border: 2px solid #2a1746; border-radius: 20px; }
.bids-head { display: flex; align-items: center; justify-content: space-between; height: 60px; margin: 48px 48px 0 45px; }
.bids-title { display: flex; align-items: center; gap: 11px; font-size: 38px; font-weight: 500; letter-spacing: -1.1px; }
.award-ic { width: 40px; height: 40px; color: #c084fc; }
.btn-edit { width: 133px; height: 60px; border: 2px solid #4c1d95; border-radius: 16px; background: #1e0e36; color: #d8a5f5; font-size: 26px; display: flex; align-items: center; justify-content: center; gap: 10px; padding: 0; }
.edit-ic { width: 28px; height: 28px; }
.bids-body { display: grid; grid-template-columns: 1007px 1fr; margin: 50px 0 0 46px; }
.bids-left { padding: 0 35px; }
.bids-count { font-size: 76px; line-height: 80px; font-weight: 700; color: #c084fc; text-align: center; }
.bids-label { margin-top: 13px; font-size: 30px; line-height: 44px; color: #d1d5db; text-align: center; letter-spacing: -1px; }
.kv { display: flex; align-items: center; justify-content: space-between; margin-top: 60px; height: 44px; font-size: 30px; color: #d1d5db; letter-spacing: -1.1px; }
.kv-status { margin-top: 14px; height: 51px; }
.kv-val { color: #fff; font-weight: 500; letter-spacing: -.5px; }
.pill-active { width: 139px; height: 51px; border: 2px solid #14532d; border-radius: 26px; background: #0d2414; color: #86efac; font-size: 26px; display: flex; align-items: center; justify-content: center; gap: 12px; letter-spacing: -.4px; }
.dot { width: 12px; height: 12px; border-radius: 50%; background: #4ade80; display: block; }
.bids-right { display: flex; flex-direction: column; align-items: center; padding: 54px 2px 0 0; }
.doc-ic { width: 48px; height: 48px; color: #9ca3af; }
.empty-title { margin-top: 47px; font-size: 30px; line-height: 44px; color: #d1d5db; letter-spacing: -.7px; }
.empty-sub { margin-top: 3px; font-size: 26px; line-height: 40px; color: #d1d5db; letter-spacing: -.85px; }

.stats { margin-top: 48px; display: grid; grid-template-columns: repeat(4, 1fr); gap: 33px; }
.stat { height: 171px; border: 2px solid #2a1746; border-radius: 20px; display: flex; align-items: center; gap: 21px; padding-left: 30px; }
.stat-ic { width: 44px; height: 44px; }
.stat-purple { color: #c084fc; }
.stat-green { color: #4ade80; }
.stat-text { margin-top: 9px; }
.stat-val { font-size: 52px; line-height: 60px; font-weight: 600; letter-spacing: -.4px; word-spacing: -8px; }
.stat-lbl { font-size: 30px; line-height: 42px; color: #d1d5db; letter-spacing: -1px; }
.recent { margin-top: 53px; font-size: 38px; line-height: 50px; font-weight: 500; letter-spacing: -1.1px; }
.pay-table { margin-top: 41px; width: 2152px; table-layout: fixed; border-collapse: collapse; }
.c1 { width: 912px; } .c2 { width: 174px; } .c3 { width: 210px; } .c4 { width: 304px; } .c5 { width: 351px; } .c6 { width: 201px; }
.pay-table th { height: 66px; padding: 0 0 0 32px; text-align: left; font-size: 26px; font-weight: 400; text-transform: uppercase; color: #d1d5db; letter-spacing: -.6px; }
.pay-table td { height: 146px; padding: 0 0 0 32px; vertical-align: middle; }
.pay-table .cell-low { padding-top: 5px; }
.cell-main { font-size: 30px; line-height: 44px; white-space: nowrap; letter-spacing: -.55px; word-spacing: -2px; }
.cell-sub { font-size: 26px; line-height: 28px; color: #9ca3af; white-space: nowrap; letter-spacing: -.75px; }
.cell-date { font-size: 30px; color: #e5e7eb; letter-spacing: -1.4px; }
.pill-done { display: inline-flex; align-items: center; justify-content: center; gap: 8px; width: 208px; height: 52px; border: 2px solid #14532d; border-radius: 26px; background: #0d2414; color: #4ade80; font-size: 26px; }
.done-ic { width: 32px; height: 32px; }
.eye-ic { width: 32px; height: 32px; color: #d1d5db; margin-left: 15px; }

.scrolltrack { width: 15px; flex: none; background: #141414; padding-top: 643px; }
.scrollthumb { display: block; height: 600px; border-radius: 8px; background: linear-gradient(180deg, #7160d2, #8b66f0); }

/* dock */
.desk { position: relative; flex: 1; padding: 5px 0 0 65px; }
.wall { position: absolute; inset: 0; width: 100%; height: 100%; }
.dock {
  position: relative;
  width: 2810px;
  height: 99px;
  border: 2px solid rgba(255, 255, 255, .14);
  border-radius: 28px;
  background: linear-gradient(90deg, #55535f 0, #5a5770 22%, #6c64d8 36%, #6c63e6 78%, #6058b8 100%);
  display: flex;
  align-items: flex-start;
  gap: 20.6px;
  padding: 14px 0 0 13px;
}
.di { position: relative; width: 62px; height: 81px; flex: none; }
.a { width: 62px; height: 62px; display: block; }
.di.on::after { content: ""; position: absolute; left: 28px; top: 72px; width: 6px; height: 7px; border-radius: 50%; background: #05054a; }
.dock-sep { width: 2px; height: 72px; margin: -3px 8px 0; background: #2c2a7c; flex: none; }
.dock-sep-end { margin: -3px -1px 0 8px; background: #3a3490; }
.trash { width: 56px; }
.a-trash { width: 56px; height: 73px; display: block; margin-top: -7px; }
.badge { position: absolute; top: -12px; right: -8px; min-width: 30px; height: 30px; border-radius: 15px; background: #f0372f; color: #fff; font-size: 18px; font-weight: 400; line-height: 30px; text-align: center; }
.badge-wide { min-width: 34px; height: 34px; line-height: 34px; border-radius: 17px; font-size: 15px; right: -9px; }
.cal-m { font-size: 12px; font-weight: 600; fill: #fff; text-anchor: middle; font-family: "Inter", sans-serif; }
.cal-d { font-size: 34px; fill: #222; text-anchor: middle; font-weight: 300; font-family: "Inter", sans-serif; }
.ij { font-size: 20px; font-weight: 700; fill: #fff; font-family: "Liberation Mono", monospace; }
.word { font-size: 20px; font-weight: 600; fill: #fff; text-anchor: middle; font-family: "Inter", sans-serif; }
.wa-dock { fill: #fff; }
.white-fill { fill: #fff; }
```
